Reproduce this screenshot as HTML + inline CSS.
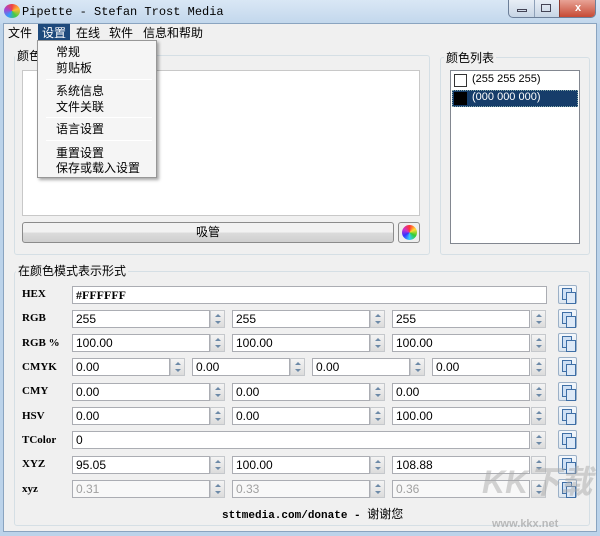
<!DOCTYPE html>
<html style="overflow:hidden"><head><meta charset="utf-8"><style>
*{box-sizing:border-box;margin:0;padding:0}
html,body{width:600px;height:536px;overflow:hidden}
body{background:#bcd3ea;font-family:"Liberation Sans","Noto Sans CJK SC",sans-serif;font-size:12px;position:relative}
.a{position:absolute;white-space:nowrap}
.title{left:0;top:0;width:600px;height:24px;background:linear-gradient(#d9e7f5,#c2d7ec);}
.client{left:3px;top:23px;width:594px;height:509px;background:#f0f0f0;border:1px solid #8aa4c0}
.grp{border:1px solid #d5dfe5;border-radius:3px}
.lbl{background:#f0f0f0;padding:0 2px;font-size:12px;color:#000}
.in{background:#fff;border:1px solid #abadb3;height:18px;font-size:12px;padding:1px 3px;line-height:15px;font-family:"Liberation Sans",sans-serif}
.sp{width:15px;height:18px;border:1px solid #c5c8cc;background:linear-gradient(#f4f4f4,#dcdcdc)}
.sp:before{content:"";position:absolute;left:4px;top:3px;border:3px solid transparent;border-bottom:3px solid #6d8aa8;border-top:0}
.sp:after{content:"";position:absolute;left:4px;top:10px;border:3px solid transparent;border-top:3px solid #6d8aa8;border-bottom:0}
.rl{left:22px;font-family:"Liberation Serif",serif;font-weight:bold;font-size:11px}
.cp{width:19px;height:19px;border:1px solid #9bb0c7;border-radius:2px;background:linear-gradient(#f4f8fc,#dce6f0)}
.cp:before{content:"";position:absolute;left:3px;top:2px;width:8px;height:10px;border:1px solid #3f6fa6;background:#cfe0f4}
.cp:after{content:"";position:absolute;left:7px;top:6px;width:8px;height:10px;border:1px solid #3f6fa6;background:#dde9f7}
.dis{color:#a0a0a0}
.menu{left:37px;top:40px;width:120px;height:138px;background:#f5f5f5;border:1px solid #979797;box-shadow:2px 2px 3px rgba(0,0,0,.35)}
.mi{left:18px;font-size:12px}
.sep{left:8px;width:106px;height:1px;background:#c5c5c5;border-bottom:1px solid #fff}
</style></head><body>
<div class="a title"></div>
<div class="a" style="left:4px;top:4px;width:16px;height:14px;border-radius:50%;background:conic-gradient(#e44,#fb3,#4c4,#39f,#a4c,#e44)"></div>
<div class="a" style="left:22px;top:5px;font-family:'Liberation Mono',monospace;font-size:12px">Pipette - Stefan Trost Media</div>
<div class="a" style="left:508px;top:0;width:88px;height:18px;border:1px solid #6c7f99;border-top:0;border-radius:0 0 5px 5px;background:linear-gradient(#e8eef6,#c7d5e5);overflow:hidden">
<div class="a" style="left:25px;top:0;width:1px;height:18px;background:#8ea0b8"></div>
<div class="a" style="left:50px;top:0;width:37px;height:18px;background:linear-gradient(#e8a396,#c4452f);border-left:1px solid #8d3a2d;color:#fff;text-align:center;font-weight:bold;font-size:11px;line-height:16px">x</div>
<div class="a" style="left:8px;top:9px;width:10px;height:3px;border:1px solid #445"></div>
<div class="a" style="left:32px;top:4px;width:10px;height:8px;border:1px solid #445"></div>
</div>
<div class="a client"></div>
<div class="a" style="left:4px;top:24px;width:592px;height:17px;background:#f0f0f0"></div>
<div class="a" style="left:8px;top:24px">文件</div>
<div class="a" style="left:38px;top:24px;width:32px;height:17px;background:#1e4a7c;color:#fff;padding:0 4px">设置</div>
<div class="a" style="left:76px;top:24px">在线</div>
<div class="a" style="left:109px;top:24px">软件</div>
<div class="a" style="left:143px;top:24px">信息和帮助</div>

<div class="a grp" style="left:14px;top:55px;width:416px;height:200px"></div>
<div class="a lbl" style="left:15px;top:47px">颜色</div>
<div class="a" style="left:22px;top:70px;width:398px;height:146px;background:#fff;border:1px solid #c8c8c8"></div>
<div class="a" style="left:22px;top:222px;width:372px;height:21px;border:1px solid #8b8b8b;border-radius:3px;background:linear-gradient(#f2f2f2 50%,#dcdcdc 50%,#cfcfcf);text-align:center;line-height:19px">吸管</div>
<div class="a" style="left:398px;top:222px;width:22px;height:21px;border:1px solid #8b8b8b;border-radius:3px;background:#eee"></div>
<div class="a" style="left:402px;top:225px;width:15px;height:15px;border-radius:50%;background:conic-gradient(#f33,#fd3,#3c3,#3cf,#33f,#c3c,#f33)"></div>

<div class="a grp" style="left:440px;top:57px;width:150px;height:198px"></div>
<div class="a lbl" style="left:444px;top:49px">颜色列表</div>
<div class="a" style="left:450px;top:70px;width:130px;height:174px;background:#fff;border:1px solid #828790"></div>
<div class="a" style="left:454px;top:74px;width:13px;height:13px;border:1px solid #333;background:#fff"></div>
<div class="a" style="left:472px;top:73px;font-size:11px">(255 255 255)</div>
<div class="a" style="left:452px;top:90px;width:126px;height:17px;background:#163d6a;border:1px dotted #8aa"></div>
<div class="a" style="left:454px;top:92px;width:13px;height:13px;background:#000"></div>
<div class="a" style="left:472px;top:91px;font-size:11px;color:#fff">(000 000 000)</div>

<div class="a grp" style="left:14px;top:271px;width:576px;height:255px"></div>
<div class="a lbl" style="left:16px;top:262px">在颜色模式表示形式</div>

<div class="a rl" style="top:288px">HEX</div>
<div class="a in" style="left:72px;top:286px;width:475px;font-weight:bold;font-family:'Liberation Serif',serif">#FFFFFF</div>
<div class="a cp" style="left:558px;top:285px"></div>

<div class="a rl" style="top:312px">RGB</div>
<div class="a in" style="left:72px;top:310px;width:138px">255</div><div class="a sp" style="left:210px;top:310px"></div>
<div class="a in" style="left:232px;top:310px;width:138px">255</div><div class="a sp" style="left:370px;top:310px"></div>
<div class="a in" style="left:392px;top:310px;width:138px">255</div><div class="a sp" style="left:531px;top:310px"></div>
<div class="a cp" style="left:558px;top:309px"></div>

<div class="a rl" style="top:337px">RGB %</div>
<div class="a in" style="left:72px;top:334px;width:138px">100.00</div><div class="a sp" style="left:210px;top:334px"></div>
<div class="a in" style="left:232px;top:334px;width:138px">100.00</div><div class="a sp" style="left:370px;top:334px"></div>
<div class="a in" style="left:392px;top:334px;width:138px">100.00</div><div class="a sp" style="left:531px;top:334px"></div>
<div class="a cp" style="left:558px;top:333px"></div>

<div class="a rl" style="top:361px">CMYK</div>
<div class="a in" style="left:72px;top:358px;width:98px">0.00</div><div class="a sp" style="left:170px;top:358px"></div>
<div class="a in" style="left:192px;top:358px;width:98px">0.00</div><div class="a sp" style="left:290px;top:358px"></div>
<div class="a in" style="left:312px;top:358px;width:98px">0.00</div><div class="a sp" style="left:410px;top:358px"></div>
<div class="a in" style="left:432px;top:358px;width:98px">0.00</div><div class="a sp" style="left:531px;top:358px"></div>
<div class="a cp" style="left:558px;top:357px"></div>

<div class="a rl" style="top:385px">CMY</div>
<div class="a in" style="left:72px;top:383px;width:138px">0.00</div><div class="a sp" style="left:210px;top:383px"></div>
<div class="a in" style="left:232px;top:383px;width:138px">0.00</div><div class="a sp" style="left:370px;top:383px"></div>
<div class="a in" style="left:392px;top:383px;width:138px">0.00</div><div class="a sp" style="left:531px;top:383px"></div>
<div class="a cp" style="left:558px;top:382px"></div>

<div class="a rl" style="top:410px">HSV</div>
<div class="a in" style="left:72px;top:407px;width:138px">0.00</div><div class="a sp" style="left:210px;top:407px"></div>
<div class="a in" style="left:232px;top:407px;width:138px">0.00</div><div class="a sp" style="left:370px;top:407px"></div>
<div class="a in" style="left:392px;top:407px;width:138px">100.00</div><div class="a sp" style="left:531px;top:407px"></div>
<div class="a cp" style="left:558px;top:406px"></div>

<div class="a rl" style="top:434px">TColor</div>
<div class="a in" style="left:72px;top:431px;width:458px">0</div><div class="a sp" style="left:531px;top:431px"></div>
<div class="a cp" style="left:558px;top:430px"></div>

<div class="a rl" style="top:458px">XYZ</div>
<div class="a in" style="left:72px;top:456px;width:138px">95.05</div><div class="a sp" style="left:210px;top:456px"></div>
<div class="a in" style="left:232px;top:456px;width:138px">100.00</div><div class="a sp" style="left:370px;top:456px"></div>
<div class="a in" style="left:392px;top:456px;width:138px">108.88</div><div class="a sp" style="left:531px;top:456px"></div>
<div class="a cp" style="left:558px;top:455px"></div>

<div class="a rl" style="top:483px">xyz</div>
<div class="a in dis" style="left:72px;top:480px;width:138px;background:#f8f8f8">0.31</div><div class="a sp" style="left:210px;top:480px"></div>
<div class="a in dis" style="left:232px;top:480px;width:138px;background:#f8f8f8">0.33</div><div class="a sp" style="left:370px;top:480px"></div>
<div class="a in dis" style="left:392px;top:480px;width:138px;background:#f8f8f8">0.36</div><div class="a sp" style="left:531px;top:480px"></div>
<div class="a cp" style="left:558px;top:479px"></div>

<div class="a" style="left:222px;top:505px;font-family:'Liberation Mono',monospace;font-size:11px;font-weight:bold">sttmedia.com/donate - <span style="font-family:'Noto Sans CJK SC',sans-serif;font-weight:normal;font-size:12px">谢谢您</span></div>
<div class="a" style="left:482px;top:462px;font-size:32px;line-height:40px;font-weight:bold;color:rgba(170,170,170,.5);font-style:italic">KK下载</div>
<div class="a" style="left:492px;top:518px;font-size:11px;font-weight:bold;color:rgba(150,150,150,.6)">www.kkx.net</div>

<div class="a menu">
<div class="a mi" style="top:2px">常规</div>
<div class="a mi" style="top:18px">剪贴板</div>
<div class="a sep" style="top:38px"></div>
<div class="a mi" style="top:41px">系统信息</div>
<div class="a mi" style="top:57px">文件关联</div>
<div class="a sep" style="top:76px"></div>
<div class="a mi" style="top:79px">语言设置</div>
<div class="a sep" style="top:99px"></div>
<div class="a mi" style="top:103px">重置设置</div>
<div class="a mi" style="top:118px">保存或载入设置</div>
</div>
</body></html>
